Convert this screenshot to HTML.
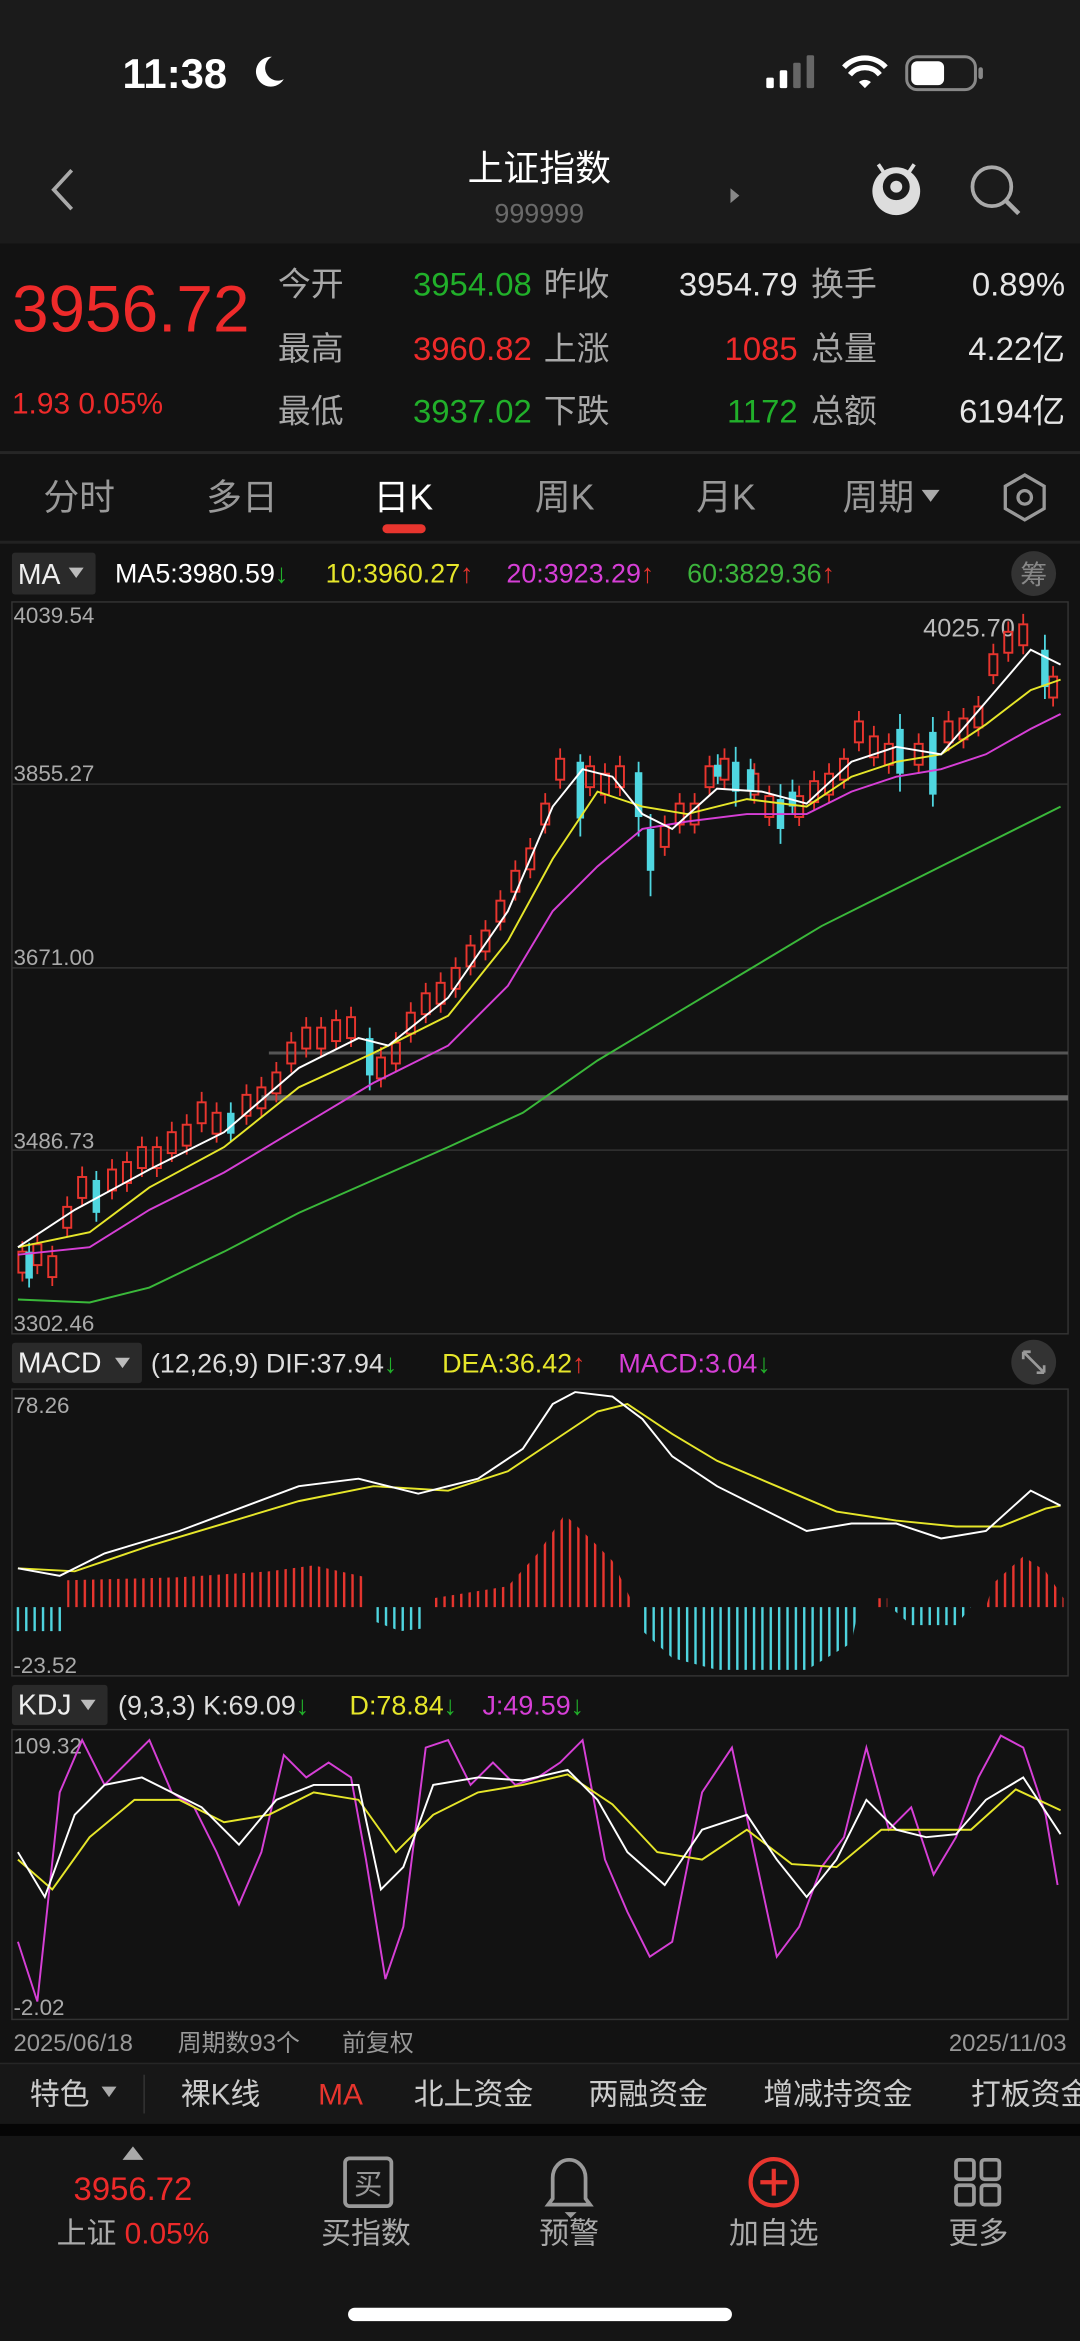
<!DOCTYPE html>
<html><head><meta charset="utf-8">
<style>
html,body{margin:0;padding:0;background:#121212;}
svg{display:block;}
text{font-family:"Liberation Sans","Noto Sans CJK SC",sans-serif;}
</style></head>
<body>
<svg width="1080" height="2341" viewBox="0 0 723 1567.3" preserveAspectRatio="none" xmlns="http://www.w3.org/2000/svg">
<defs>
<pattern id="pr" width="5.6" height="10" patternUnits="userSpaceOnUse"><rect x="0" y="0" width="1.6" height="10" fill="#e8352e"/></pattern>
<pattern id="pc" width="5.6" height="10" patternUnits="userSpaceOnUse"><rect x="0" y="0" width="1.6" height="10" fill="#4fd6e0"/></pattern>
<marker id="cd" markerUnits="userSpaceOnUse" markerWidth="12" markerHeight="40" refX="6" refY="20" orient="0" overflow="visible">
<path d="M6 6 V13 M6 27 V33" stroke="#e8352e" stroke-width="1.2"/>
<rect x="3.3" y="13" width="5.4" height="14" fill="none" stroke="#e8352e" stroke-width="1.3"/>
</marker>
</defs>
<rect x="0" y="0" width="723" height="1568" fill="#121212"/>
<rect x="0" y="0" width="723" height="163" fill="#1b1b1b"/>
<!-- status bar -->
<text x="82" y="59" font-size="28" font-weight="bold" fill="#fff">11:38</text>
<path d="M182 38 a10 10 0 1 0 8 15 a8 8 0 0 1 -8 -15z" fill="#fff"/>
<rect x="513" y="52" width="5" height="7" rx="1" fill="#fff"/>
<rect x="522" y="47" width="5" height="12" rx="1" fill="#fff"/>
<rect x="531" y="42" width="5" height="17" rx="1" fill="#666"/>
<rect x="540" y="37" width="5" height="22" rx="1" fill="#666"/>
<path d="M565 45 a19 19 0 0 1 28 0 M569 50 a13 13 0 0 1 20 0" stroke="#fff" stroke-width="3.5" fill="none"/>
<path d="M575 55 l4 4 l4 -4 a6 6 0 0 0 -8 0z" fill="#fff"/>
<rect x="607" y="38" width="46" height="22" rx="7" fill="none" stroke="#888" stroke-width="2"/>
<rect x="610" y="41" width="22" height="16" rx="4" fill="#fff"/>
<rect x="655" y="45" width="3" height="8" rx="1.5" fill="#888"/>
<!-- header -->
<path d="M48 114 L36 127 L48 140" stroke="#aaa" stroke-width="2.5" fill="none"/>
<text x="361" y="121" font-size="24" fill="#fff" text-anchor="middle">上证指数</text>
<text x="361" y="149" font-size="18" fill="#6a6a6a" text-anchor="middle">999999</text>
<path d="M489 126 l6 5 l-6 5z" fill="#888"/>
<circle cx="600" cy="128" r="16" fill="#ddd"/>
<circle cx="600" cy="125" r="9" fill="#1b1b1b"/>
<circle cx="600" cy="125" r="4" fill="#ddd"/>
<path d="M588 110 l4 6 M612 110 l-4 6" stroke="#ddd" stroke-width="2.5"/>
<circle cx="664" cy="125" r="13" stroke="#aaa" stroke-width="2.5" fill="none"/>
<path d="M673 134 l9 9" stroke="#aaa" stroke-width="3"/>
<!-- info -->
<text x="8" y="222" font-size="44" fill="#ee2a2a">3956.72</text>
<text x="8" y="277" font-size="20" fill="#ee2a2a">1.93 0.05%</text>
<g font-size="22" fill="#a8a8a8">
<text x="186" y="198">今开</text><text x="186" y="241">最高</text><text x="186" y="283">最低</text>
<text x="364" y="198">昨收</text><text x="364" y="241">上涨</text><text x="364" y="283">下跌</text>
<text x="543" y="198">换手</text><text x="543" y="241">总量</text><text x="543" y="283">总额</text>
</g>
<g font-size="22" text-anchor="end">
<text x="356" y="198" fill="#21b02a">3954.08</text>
<text x="356" y="241" fill="#ee2a2a">3960.82</text>
<text x="356" y="283" fill="#21b02a">3937.02</text>
<text x="534" y="198" fill="#e6e6e6">3954.79</text>
<text x="534" y="241" fill="#ee2a2a">1085</text>
<text x="534" y="283" fill="#21b02a">1172</text>
<text x="713" y="198" fill="#e6e6e6">0.89%</text>
<text x="713" y="241" fill="#e6e6e6">4.22亿</text>
<text x="713" y="283" fill="#e6e6e6">6194亿</text>
</g>
<rect x="0" y="302" width="723" height="2" fill="#262626"/>
<!-- tabs -->
<g font-size="24" fill="#999" text-anchor="middle">
<text x="53" y="341">分时</text><text x="162" y="341">多日</text>
<text x="270" y="341" fill="#fff">日K</text><text x="378" y="341">周K</text>
<text x="486" y="341">月K</text><text x="588" y="341">周期</text>
</g>
<path d="M617 328 l12 0 l-6 8z" fill="#aaa"/>
<path d="M686 318 l13 7.5 v15 l-13 7.5 l-13 -7.5 v-15z" stroke="#999" stroke-width="2.2" fill="none"/>
<circle cx="686" cy="333" r="4.5" stroke="#999" stroke-width="2.2" fill="none"/>
<rect x="256" y="351" width="29" height="6" rx="3" fill="#e8352e"/>
<rect x="0" y="362" width="723" height="2" fill="#222"/>
<!-- MA row -->
<rect x="8" y="370" width="56" height="28" rx="2" fill="#2a2a2a"/>
<text x="12" y="391" font-size="19" fill="#eee">MA</text>
<path d="M46 380 l10 0 l-5 7z" fill="#bbb"/>
<g font-size="18">
<text x="77" y="390" fill="#fff">MA5:3980.59<tspan fill="#21b02a">↓</tspan></text>
<text x="218" y="390" fill="#e6e62a">10:3960.27<tspan fill="#e8352e">↑</tspan></text>
<text x="339" y="390" fill="#d63fd6">20:3923.29<tspan fill="#e8352e">↑</tspan></text>
<text x="460" y="390" fill="#3cb43c">60:3829.36<tspan fill="#e8352e">↑</tspan></text>
</g>
<circle cx="692" cy="384" r="15" fill="#333"/>
<text x="692" y="391" font-size="18" fill="#888" text-anchor="middle">筹</text>
<!-- main chart -->
<rect x="8" y="403" width="707" height="490" fill="none" stroke="#333" stroke-width="1"/>
<path d="M8 525 H715 M8 648 H715 M8 770 H715" stroke="#333" stroke-width="1"/>
<path d="M180 705 H715" stroke="#555" stroke-width="2"/>
<path d="M175 735 H715" stroke="#666" stroke-width="3.5"/>
<g font-size="15" fill="#aaa">
<text x="9" y="417">4039.54</text><text x="9" y="523">3855.27</text>
<text x="9" y="646">3671.00</text><text x="9" y="769">3486.73</text><text x="9" y="891">3302.46</text>
</g>
<text x="618" y="426" font-size="17" fill="#bbb">4025.70</text>
<polyline fill="none" stroke="#3ab83a" stroke-width="1.3" points="12,870 60,872 100,862 150,838 200,812 250,790 300,768 350,745 400,710 450,680 500,650 550,620 600,595 650,570 710,540"/>
<polyline fill="none" stroke="none" marker-start="url(#cd)" marker-mid="url(#cd)" marker-end="url(#cd)" points="15,845 25,840 35,848 45,815 55,795 75,790 85,785 95,775 105,775 115,765 125,760 135,745 145,752 165,740 175,735 185,725 195,705 205,695 215,695 225,690 235,688 255,715 265,705 275,685 285,672 295,665 305,655 315,640 325,630 335,610 345,590 355,575 365,545 375,515 395,520 405,525 415,520 445,560 455,545 465,545 475,520 485,515 505,525 515,540 535,540 545,530 555,525 565,515 575,490 585,500 595,505 615,505 635,490 645,488 655,480 665,445 675,430 685,425 705,460"/>
<g fill="#4fd6e0">
<rect x="17" y="838" width="5" height="18"/><rect x="62" y="790" width="5" height="22"/>
<rect x="152" y="745" width="5" height="14"/><rect x="245" y="695" width="5" height="25"/>
<rect x="386" y="510" width="5" height="38"/><rect x="425" y="517" width="5" height="30"/>
<rect x="433" y="555" width="5" height="28"/><rect x="490" y="510" width="5" height="20"/>
<rect x="520" y="535" width="5" height="20"/><rect x="600" y="488" width="5" height="30"/>
<rect x="622" y="490" width="5" height="42"/><rect x="697" y="435" width="5" height="25"/>
<rect x="478" y="512" width="5" height="8"/><rect x="500" y="515" width="5" height="14"/>
<rect x="528" y="530" width="5" height="10"/>
</g>
<path d="M19.5 832 V862 M64.5 784 V818 M154.5 738 V764 M247.5 688 V730 M388.5 505 V560 M427.5 510 V560 M435.5 545 V600 M492.5 500 V540 M522.5 525 V565 M602.5 478 V530 M624.5 480 V540 M699.5 425 V468 M480.5 505 V525 M502.5 508 V535 M530.5 522 V545" stroke="#4fd6e0" stroke-width="1.2"/>
<polyline fill="none" stroke="#d63fd6" stroke-width="1.3" points="12,840 60,835 100,810 150,785 200,755 250,725 300,700 340,660 370,610 400,580 430,555 460,550 500,545 540,545 570,530 600,520 630,515 660,505 690,488 710,478"/>
<polyline fill="none" stroke="#e6e62a" stroke-width="1.3" points="12,835 60,825 100,795 150,768 200,728 250,705 300,680 340,630 370,575 400,530 430,540 460,545 500,535 540,540 570,520 600,510 630,505 660,485 690,462 710,455"/>
<polyline fill="none" stroke="#fff" stroke-width="1.3" points="12,835 50,810 100,783 150,758 200,715 240,695 260,700 300,668 340,610 370,540 390,515 410,520 430,545 450,555 480,528 510,530 540,538 570,510 600,500 630,505 660,470 690,435 710,445"/>
<!-- MACD row -->
<rect x="8" y="899" width="87" height="27" rx="2" fill="#2a2a2a"/>
<text x="12" y="919" font-size="19" fill="#eee">MACD</text>
<path d="M77 909 l10 0 l-5 7z" fill="#bbb"/>
<g font-size="18">
<text x="101" y="919" fill="#ddd">(12,26,9) DIF:37.94<tspan fill="#21b02a">↓</tspan></text>
<text x="296" y="919" fill="#e6e62a">DEA:36.42<tspan fill="#e8352e">↑</tspan></text>
<text x="414" y="919" fill="#d63fd6">MACD:3.04<tspan fill="#21b02a">↓</tspan></text>
</g>
<circle cx="692" cy="912" r="15" fill="#333"/>
<path d="M685 905 l14 14 M685 905 v5 M685 905 h5 M699 919 v-5 M699 919 h-5" stroke="#999" stroke-width="1.8" fill="none"/>
<rect x="8" y="930" width="707" height="192" fill="none" stroke="#333"/>
<text x="9" y="946" font-size="15" fill="#aaa">78.26</text>
<text x="9" y="1120" font-size="15" fill="#aaa">-23.52</text>
<polygon fill="url(#pc)" points="11,1076 44,1076 44,1092 11,1092"/>
<polygon fill="url(#pr)" points="45,1076 45,1058 120,1056 180,1052 210,1048 245,1056 245,1076"/>
<polygon fill="url(#pc)" points="252,1076 285,1076 285,1090 268,1092 252,1086"/>
<polygon fill="url(#pr)" points="288,1076 290,1070 340,1062 360,1040 378,1014 395,1030 410,1045 422,1070 424,1076"/>
<polygon fill="url(#pc)" points="428,1076 575,1076 570,1100 540,1118 480,1118 450,1110 428,1090"/>
<polygon fill="url(#pc)" points="596,1076 650,1076 640,1088 610,1088"/>
<polygon fill="url(#pr)" points="584,1076 586,1070 594,1070 594,1076"/>
<polygon fill="url(#pr)" points="660,1076 665,1060 685,1042 700,1052 712,1070 712,1076"/>
<polyline fill="none" stroke="#e6e62a" stroke-width="1.3" points="12,1050 50,1052 100,1035 150,1020 200,1005 250,995 300,998 340,985 370,965 400,945 420,940 450,960 480,978 520,995 560,1012 600,1018 640,1022 670,1022 700,1010 710,1008"/>
<polyline fill="none" stroke="#fff" stroke-width="1.3" points="12,1050 40,1055 70,1040 120,1025 160,1010 200,995 240,990 280,1000 320,990 350,970 370,940 385,932 410,935 430,950 450,975 480,995 510,1010 540,1025 570,1020 600,1020 630,1030 660,1025 690,998 710,1008"/>
<!-- KDJ row -->
<rect x="8" y="1128" width="64" height="27" rx="2" fill="#2a2a2a"/>
<text x="12" y="1148" font-size="19" fill="#eee">KDJ</text>
<path d="M54 1138 l10 0 l-5 7z" fill="#bbb"/>
<g font-size="18">
<text x="79" y="1148" fill="#ddd">(9,3,3) K:69.09<tspan fill="#21b02a">↓</tspan></text>
<text x="234" y="1148" fill="#e6e62a">D:78.84<tspan fill="#21b02a">↓</tspan></text>
<text x="323" y="1148" fill="#d63fd6">J:49.59<tspan fill="#21b02a">↓</tspan></text>
</g>
<rect x="8" y="1158" width="707" height="194" fill="none" stroke="#333"/>
<text x="9" y="1174" font-size="15" fill="#aaa">109.32</text>
<text x="9" y="1349" font-size="15" fill="#aaa">-2.02</text>
<polyline fill="none" stroke="#d63fd6" stroke-width="1.3" points="12,1300 25,1340 40,1200 55,1165 70,1195 85,1180 100,1165 115,1200 130,1210 145,1240 160,1275 175,1240 190,1175 205,1190 220,1180 235,1190 245,1245 258,1325 270,1290 285,1170 300,1165 315,1195 330,1180 345,1195 360,1190 375,1180 390,1165 405,1245 420,1280 435,1310 450,1300 470,1200 490,1170 505,1240 520,1310 535,1290 550,1250 565,1230 580,1170 595,1225 610,1210 625,1255 640,1230 655,1190 670,1162 685,1170 700,1215 708,1262"/>
<polyline fill="none" stroke="#e6e62a" stroke-width="1.3" points="12,1245 35,1265 60,1230 90,1205 120,1205 150,1220 180,1215 210,1200 240,1205 265,1240 290,1215 320,1200 350,1195 380,1188 410,1208 440,1240 470,1245 500,1225 530,1248 560,1250 590,1225 620,1225 650,1225 680,1198 710,1212"/>
<polyline fill="none" stroke="#fff" stroke-width="1.3" points="12,1240 30,1270 50,1215 70,1195 95,1190 115,1200 135,1210 160,1235 185,1205 210,1195 240,1195 255,1265 270,1250 290,1195 320,1190 350,1192 380,1185 400,1205 420,1240 445,1262 470,1225 500,1215 520,1245 540,1270 560,1245 580,1205 600,1225 620,1230 640,1228 660,1205 685,1190 710,1228"/>
<!-- date row -->
<g font-size="16" fill="#999">
<text x="9" y="1373">2025/06/18</text><text x="119" y="1373">周期数93个</text>
<text x="229" y="1373">前复权</text><text x="714" y="1373" text-anchor="end">2025/11/03</text>
</g>
<rect x="0" y="1381" width="723" height="41" fill="#171717"/>
<rect x="0" y="1381" width="723" height="1" fill="#262626"/>
<g font-size="20" fill="#ccc">
<text x="20" y="1409">特色</text>
<text x="121" y="1409">裸K线</text>
<text x="213" y="1409" fill="#e8352e">MA</text>
<text x="277" y="1409">北上资金</text>
<text x="394" y="1409">两融资金</text>
<text x="511" y="1409">增减持资金</text>
<text x="650" y="1409">打板资金</text>
</g>
<path d="M68 1397 l10 0 l-5 7z" fill="#aaa"/>
<rect x="96" y="1389" width="1" height="26" fill="#333"/>
<rect x="0" y="1422" width="723" height="8" fill="#050505"/>
<rect x="0" y="1430" width="723" height="138" fill="#151515"/>
<!-- nav -->
<path d="M82 1446 l7 -9 l7 9z" fill="#aaa"/>
<text x="89" y="1473" font-size="22" fill="#ee2a2a" text-anchor="middle">3956.72</text>
<text x="89" y="1502" font-size="20" fill="#aaa" text-anchor="middle">上证 <tspan fill="#ee2a2a">0.05%</tspan></text>
<rect x="231" y="1445" width="31" height="32" rx="3" fill="none" stroke="#999" stroke-width="2.5"/>
<text x="246.5" y="1469" font-size="19" fill="#999" text-anchor="middle">买</text>
<text x="245" y="1502" font-size="20" fill="#aaa" text-anchor="middle">买指数</text>
<path d="M370 1472 v-14 a11 12 0 0 1 22 0 v14 l3 4 h-28z" stroke="#999" stroke-width="2.5" fill="none"/>
<path d="M378 1481 h8 l-4 4z" fill="#999"/>
<text x="381" y="1502" font-size="20" fill="#aaa" text-anchor="middle">预警</text>
<circle cx="518" cy="1461" r="15.5" stroke="#e8352e" stroke-width="2.8" fill="none"/>
<path d="M518 1452 v18 M509 1461 h18" stroke="#e8352e" stroke-width="2.8"/>
<text x="518" y="1502" font-size="20" fill="#aaa" text-anchor="middle">加自选</text>
<g fill="none" stroke="#999" stroke-width="2.5">
<rect x="640" y="1446" width="12" height="13" rx="2"/><rect x="657" y="1446" width="12" height="13" rx="2"/>
<rect x="640" y="1463" width="12" height="13" rx="2"/><rect x="657" y="1463" width="12" height="13" rx="2"/>
</g>
<text x="655" y="1502" font-size="20" fill="#aaa" text-anchor="middle">更多</text>
<rect x="233" y="1545" width="257" height="9" rx="4.5" fill="#fff"/>
</svg>
</body></html>
